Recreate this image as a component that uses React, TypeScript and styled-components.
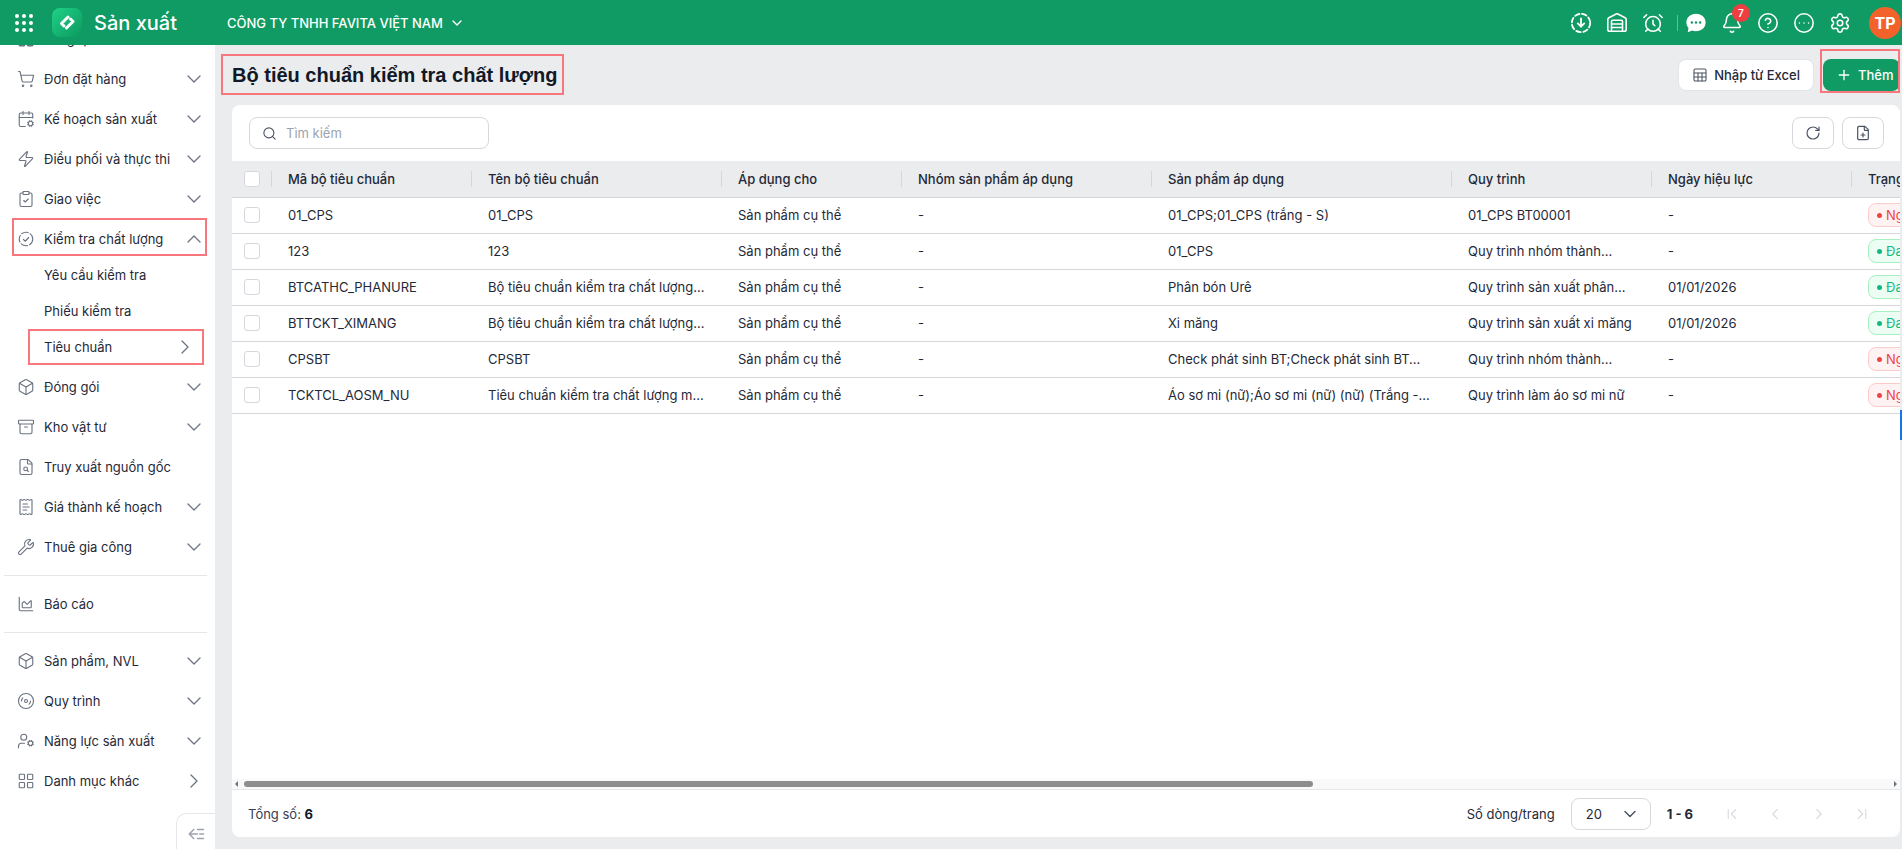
import React from "react";
import styled, { createGlobalStyle } from "styled-components";
import {
  Archive,
  ArrowLeft,
  Box,
  CalendarCog,
  ChartArea,
  ChevronDown,
  ChevronFirst,
  ChevronLast,
  ChevronLeft,
  ChevronRight,
  ChevronUp,
  CircleEllipsis,
  CircleHelp,
  ClipboardCheck,
  Disc3,
  FilePlus,
  FileSearch,
  LayoutGrid,
  Plus,
  ReceiptText,
  RotateCw,
  Search,
  Settings,
  Sheet,
  ShoppingCart,
  AlarmClock,
  Bell,
  UserCog,
  Warehouse,
  Wrench,
  Zap,
} from "lucide-react";

type NavItem = {
  label: string;
  icon: React.ReactNode;
  arrow?: "down" | "up" | "right";
};

type Row = {
  code: string;
  name: string;
  target: string;
  product: string;
  process: string;
  date: string;
  active: boolean;
};

const ROWS: Row[] = [
  {
    code: "01_CPS",
    name: "01_CPS",
    target: "Sản phẩm cụ thể",
    product: "01_CPS;01_CPS (trắng - S)",
    process: "01_CPS BT00001",
    date: "-",
    active: false,
  },
  {
    code: "123",
    name: "123",
    target: "Sản phẩm cụ thể",
    product: "01_CPS",
    process: "Quy trình nhóm thành...",
    date: "-",
    active: true,
  },
  {
    code: "BTCATHC_PHANURE",
    name: "Bộ tiêu chuẩn kiểm tra chất lượng...",
    target: "Sản phẩm cụ thể",
    product: "Phân bón Urê",
    process: "Quy trình sản xuất phân...",
    date: "01/01/2026",
    active: true,
  },
  {
    code: "BTTCKT_XIMANG",
    name: "Bộ tiêu chuẩn kiểm tra chất lượng...",
    target: "Sản phẩm cụ thể",
    product: "Xi măng",
    process: "Quy trình sản xuất xi măng",
    date: "01/01/2026",
    active: true,
  },
  {
    code: "CPSBT",
    name: "CPSBT",
    target: "Sản phẩm cụ thể",
    product: "Check phát sinh BT;Check phát sinh BT...",
    process: "Quy trình nhóm thành...",
    date: "-",
    active: false,
  },
  {
    code: "TCKTCL_AOSM_NU",
    name: "Tiêu chuẩn kiểm tra chất lượng m...",
    target: "Sản phẩm cụ thể",
    product: "Áo sơ mi (nữ);Áo sơ mi (nữ) (nữ) (Trắng -...",
    process: "Quy trình làm áo sơ mi nữ",
    date: "-",
    active: false,
  },
];

const COLUMNS = [
  { title: "Mã bộ tiêu chuẩn", width: 200 },
  { title: "Tên bộ tiêu chuẩn", width: 250 },
  { title: "Áp dụng cho", width: 180 },
  { title: "Nhóm sản phẩm áp dụng", width: 250 },
  { title: "Sản phẩm áp dụng", width: 300 },
  { title: "Quy trình", width: 200 },
  { title: "Ngày hiệu lực", width: 200 },
  { title: "Trạng thái", width: 200 },
];

const DashedCheck = () => (
  <svg width="18" height="18" viewBox="0 0 24 24" fill="none" stroke="currentColor" strokeWidth="1.5" strokeLinecap="round" strokeLinejoin="round">
    <circle cx="12" cy="12" r="9" strokeDasharray="9 3" />
    <path d="m8.5 12.5 2.5 2.5 4.5-5" />
  </svg>
);

const Logo = () => (
  <svg width="30" height="30" viewBox="0 0 30 30">
    <defs>
      <linearGradient id="logoFill" x1="0" y1="0" x2="1" y2="1">
        <stop offset="0" stopColor="#1fd286" />
        <stop offset="1" stopColor="#0c9960" />
      </linearGradient>
    </defs>
    <rect width="30" height="29" rx="8" fill="url(#logoFill)" />
    <path d="M9.5 15.5 16 9M14.5 20 21 13.5M9.5 15.5 12 18M21 13.5 18.500 11" fill="none" stroke="#fff" strokeWidth="3" strokeLinecap="round" />
  </svg>
);

const DownloadBadge = () => (
  <svg width="22" height="22" viewBox="0 0 24 24" fill="none" stroke="#fff" strokeWidth="2" strokeLinecap="round" strokeLinejoin="round">
    <circle cx="12" cy="12" r="10" strokeDasharray="5 3" />
    <path d="M12 7v9M8.500 12.500 12 16l3.500-3.500" />
  </svg>
);

const ChatBubble = () => (
  <svg width="22" height="22" viewBox="0 0 24 24">
    <path d="M12 2C6 2 1.500 6.200 1.500 11.500c0 2.300.9 4.400 2.300 6L3 22l4.800-1.700c1.300.5 2.700.7 4.200.7 6 0 10.500-4.200 10.500-9.500S18 2 12 2z" fill="#fff" />
    <circle cx="7.500" cy="11.500" r="1.300" fill="#0f9b63" />
    <circle cx="12" cy="11.500" r="1.300" fill="#0f9b63" />
    <circle cx="16.500" cy="11.500" r="1.300" fill="#0f9b63" />
  </svg>
);

const CollapseIcon = () => (
  <svg width="18" height="18" viewBox="0 0 24 24" fill="none" stroke="#9ca3af" strokeWidth="2" strokeLinecap="round" strokeLinejoin="round">
    <path d="M9 6 3 12l6 6M3 12h11M14 6h8M17 12h5M14 18h8" />
  </svg>
);

const TOP_NAV: NavItem[] = [
  { label: "Tổng quan", icon: <LayoutGrid size={18} />, arrow: "down" },
  { label: "Đơn đặt hàng", icon: <ShoppingCart size={18} strokeWidth={1.5} />, arrow: "down" },
  { label: "Kế hoạch sản xuất", icon: <CalendarCog size={18} strokeWidth={1.5} />, arrow: "down" },
  { label: "Điều phối và thực thi", icon: <Zap size={18} strokeWidth={1.5} />, arrow: "down" },
  { label: "Giao việc", icon: <ClipboardCheck size={18} strokeWidth={1.5} />, arrow: "down" },
  { label: "Kiểm tra chất lượng", icon: <DashedCheck />, arrow: "up" },
];

const MID_NAV: NavItem[] = [
  { label: "Đóng gói", icon: <Box size={18} strokeWidth={1.5} />, arrow: "down" },
  { label: "Kho vật tư", icon: <Archive size={18} strokeWidth={1.5} />, arrow: "down" },
  { label: "Truy xuất nguồn gốc", icon: <FileSearch size={18} strokeWidth={1.5} /> },
  { label: "Giá thành kế hoạch", icon: <ReceiptText size={18} strokeWidth={1.5} />, arrow: "down" },
  { label: "Thuê gia công", icon: <Wrench size={18} strokeWidth={1.5} />, arrow: "down" },
];

const BOTTOM_NAV: NavItem[] = [
  { label: "Sản phẩm, NVL", icon: <Box size={18} strokeWidth={1.5} />, arrow: "down" },
  { label: "Quy trình", icon: <Disc3 size={18} strokeWidth={1.5} />, arrow: "down" },
  { label: "Năng lực sản xuất", icon: <UserCog size={18} strokeWidth={1.5} />, arrow: "down" },
  { label: "Danh mục khác", icon: <LayoutGrid size={18} strokeWidth={1.5} />, arrow: "right" },
];

const renderNavItem = (item: NavItem) => (
  <NavRow key={item.label}>
    <NavIcon>{item.icon}</NavIcon>
    <NavLabel>{item.label}</NavLabel>
    {item.arrow === "down" && <ChevronDown size={24} strokeWidth={1.3} />}
    {item.arrow === "up" && <ChevronUp size={24} strokeWidth={1.3} />}
    {item.arrow === "right" && <ChevronRight size={24} strokeWidth={1.3} />}
  </NavRow>
);

export default function App() {
  return (
    <Page>
      <GlobalStyle />
      <TopBar>
        <AppDots>
          {Array.from({ length: 9 }).map((_, i) => (
            <i key={i} />
          ))}
        </AppDots>
        <LogoWrap>
          <Logo />
        </LogoWrap>
        <AppName>Sản xuất</AppName>
        <Company>
          CÔNG TY TNHH FAVITA VIỆT NAM
          <ChevronDown size={16} strokeWidth={2} />
        </Company>
        <TopActions>
          <TopIcon><DownloadBadge /></TopIcon>
          <TopIcon><Warehouse size={22} strokeWidth={1.7} /></TopIcon>
          <TopIcon><AlarmClock size={22} strokeWidth={1.7} /></TopIcon>
          <TopDivider />
          <TopIcon><ChatBubble /></TopIcon>
          <TopIcon>
            <Bell size={22} strokeWidth={1.7} />
            <BellBadge>7</BellBadge>
          </TopIcon>
          <TopIcon><CircleHelp size={22} strokeWidth={1.7} /></TopIcon>
          <TopIcon><CircleEllipsis size={22} strokeWidth={1.7} /></TopIcon>
          <TopIcon><Settings size={22} strokeWidth={1.7} /></TopIcon>
          <Avatar>TP</Avatar>
        </TopActions>
      </TopBar>

      <Body>
        <Sidebar>
          <NavList>
            {TOP_NAV.map(renderNavItem)}
            <SubList>
              <SubRow>Yêu cầu kiểm tra</SubRow>
              <SubRow>Phiếu kiểm tra</SubRow>
              <SubRow>
                Tiêu chuẩn
                <ChevronRight size={24} strokeWidth={1.3} />
              </SubRow>
            </SubList>
            {MID_NAV.map(renderNavItem)}
            <NavSeparator />
            {renderNavItem({ label: "Báo cáo", icon: <ChartArea size={18} strokeWidth={1.5} /> })}
            <NavSeparator />
            {BOTTOM_NAV.map(renderNavItem)}
          </NavList>
          <CollapseTab>
            <CollapseIcon />
          </CollapseTab>
        </Sidebar>

        <Main>
          <PageHeader>
            <Title>Bộ tiêu chuẩn kiểm tra chất lượng</Title>
            <HeaderActions>
              <OutlineButton>
                <Sheet size={16} strokeWidth={1.6} />
                Nhập từ Excel
              </OutlineButton>
              <PrimaryButton>
                <Plus size={16} strokeWidth={2} />
                Thêm
              </PrimaryButton>
            </HeaderActions>
          </PageHeader>

          <Card>
            <Toolbar>
              <SearchBox>
                <Search size={15} strokeWidth={1.8} />
                <SearchInput placeholder="Tìm kiếm" />
              </SearchBox>
              <ToolButtons>
                <IconButton><RotateCw size={16} strokeWidth={1.8} /></IconButton>
                <IconButton><FilePlus size={16} strokeWidth={1.8} /></IconButton>
              </ToolButtons>
            </Toolbar>

            <TableArea>
              <Table>
                <colgroup>
                  <col width={40} />
                  {COLUMNS.map((c) => (
                    <col key={c.title} width={c.width} />
                  ))}
                </colgroup>
                <thead>
                  <tr>
                    <HeadCell>
                      <Checkbox />
                    </HeadCell>
                    {COLUMNS.map((c) => (
                      <HeadCell key={c.title}>{c.title}</HeadCell>
                    ))}
                  </tr>
                </thead>
                <tbody>
                  {ROWS.map((row) => (
                    <tr key={row.code}>
                      <Cell>
                        <Checkbox />
                      </Cell>
                      <Cell>{row.code}</Cell>
                      <Cell>{row.name}</Cell>
                      <Cell>{row.target}</Cell>
                      <Cell>-</Cell>
                      <Cell>{row.product}</Cell>
                      <Cell>{row.process}</Cell>
                      <Cell>{row.date}</Cell>
                      <Cell>
                        <StatusPill $active={row.active}>
                          <i />
                          {row.active ? "Đang áp dụng" : "Ngừng áp dụng"}
                        </StatusPill>
                      </Cell>
                    </tr>
                  ))}
                </tbody>
              </Table>
            </TableArea>

            <ScrollTrack>
              <ArrowLeftTip />
              <ScrollRail>
                <ScrollThumb />
              </ScrollRail>
              <ArrowRightTip />
            </ScrollTrack>

            <Footer>
              <Total>
                Tổng số: <strong>6</strong>
              </Total>
              <FooterRight>
                <PageSizeLabel>Số dòng/trang</PageSizeLabel>
                <PageSize>
                  20
                  <ChevronDown size={20} strokeWidth={1.8} />
                </PageSize>
                <PageRange>1 - 6</PageRange>
                <Pager>
                  <PagerButton><ChevronFirst size={18} strokeWidth={1.5} /></PagerButton>
                  <PagerButton><ChevronLeft size={18} strokeWidth={1.5} /></PagerButton>
                  <PagerButton><ChevronRight size={18} strokeWidth={1.5} /></PagerButton>
                  <PagerButton><ChevronLast size={18} strokeWidth={1.5} /></PagerButton>
                </Pager>
              </FooterRight>
            </Footer>
          </Card>
          <SideTab />
        </Main>
      </Body>

      <Marker $left={221} $top={54} $width={343} $height={41} />
      <Marker $left={1820} $top={49} $width={80} $height={44} />
      <Marker $left={12} $top={218} $width={195} $height={38} />
      <Marker $left={28} $top={329} $width={176} $height={36} />
    </Page>
  );
}

const GlobalStyle = createGlobalStyle`
  html, body {
    margin: 0;
    padding: 0;
    height: 100%;
    overflow: hidden;
  }
  * {
    box-sizing: border-box;
  }
  body {
    font-family: Inter, "Noto Sans", sans-serif;
    font-size: 13px;
    color: #1f2937;
  }
`;

const Page = styled.div`
  position: relative;
  width: 100%;
  height: 100vh;
  display: flex;
  flex-direction: column;
  overflow: hidden;
  background: #ebecee;
`;

const TopBar = styled.header`
  height: 45px;
  flex-shrink: 0;
  display: flex;
  align-items: center;
  padding: 0 1px 0 15px;
  background: #0f9b63;
  color: #fff;
`;

const AppDots = styled.div`
  width: 18px;
  height: 18px;
  display: grid;
  grid-template-columns: repeat(3, 4px);
  grid-template-rows: repeat(3, 4px);
  justify-content: space-between;
  align-content: space-between;

  i {
    border-radius: 50%;
    background: #fff;
  }
`;

const LogoWrap = styled.div`
  display: flex;
  margin-left: 19px;
`;

const AppName = styled.div`
  margin-left: 12px;
  font-size: 20px;
  font-weight: 500;
`;

const Company = styled.div`
  display: flex;
  align-items: center;
  gap: 6px;
  margin-left: 50px;
  font-size: 13px;
  font-weight: 500;
`;

const TopActions = styled.div`
  display: flex;
  align-items: center;
  margin-left: auto;
`;

const TopIcon = styled.div`
  position: relative;
  width: 36px;
  height: 36px;
  display: flex;
  align-items: center;
  justify-content: center;
`;

const TopDivider = styled.span`
  width: 1px;
  height: 16px;
  margin: 0 0 0 6px;
  background: rgba(255, 255, 255, 0.35);
`;

const BellBadge = styled.span`
  position: absolute;
  top: -1px;
  right: 0;
  width: 18px;
  height: 18px;
  border-radius: 50%;
  display: flex;
  align-items: center;
  justify-content: center;
  background: #ef3e42;
  font-size: 10px;
  font-weight: 600;
`;

const Avatar = styled.div`
  width: 32px;
  height: 32px;
  margin-left: 11px;
  border-radius: 50%;
  display: flex;
  align-items: center;
  justify-content: center;
  background: #f4622c;
  font-size: 16px;
  font-weight: 700;
`;

const Body = styled.div`
  flex: 1;
  min-height: 0;
  display: flex;
`;

const Sidebar = styled.aside`
  position: relative;
  width: 215px;
  flex-shrink: 0;
  overflow: hidden;
  background: #fff;
`;

const NavList = styled.nav`
  display: flex;
  flex-direction: column;
  gap: 4px;
  margin-top: -24px;
`;

const NavRow = styled.div`
  height: 36px;
  display: flex;
  align-items: center;
  padding: 0 9px 0 17px;
  color: #6b7280;
`;

const NavIcon = styled.span`
  width: 18px;
  height: 18px;
  margin-right: 9px;
  display: flex;
`;

const NavLabel = styled.span`
  flex: 1;
  font-size: 13px;
  color: #1f2937;
`;

const SubList = styled.div`
  display: flex;
  flex-direction: column;
  margin-top: -4px;
`;

const SubRow = styled.div`
  height: 36px;
  display: flex;
  align-items: center;
  justify-content: space-between;
  padding: 0 18px 0 44px;
  font-size: 13px;

  svg {
    color: #6b7280;
  }
`;

const NavSeparator = styled.hr`
  width: 203px;
  height: 1px;
  margin: 6px 0 6px 4px;
  border: 0;
  background: #e5e7eb;
`;

const CollapseTab = styled.button`
  position: absolute;
  right: 0;
  bottom: 0;
  width: 39px;
  height: 36px;
  padding: 4px 0 0;
  display: flex;
  align-items: center;
  justify-content: center;
  background: #fff;
  border: 1px solid #e5e7eb;
  border-width: 1px 0 0 1px;
  border-top-left-radius: 10px;
`;

const Main = styled.main`
  position: relative;
  flex: 1;
  min-width: 0;
  display: flex;
  flex-direction: column;
  padding: 0 2px 12px 17px;
`;

const PageHeader = styled.div`
  height: 60px;
  flex-shrink: 0;
  display: flex;
  align-items: center;
  justify-content: space-between;
`;

const Title = styled.h1`
  margin: 0;
  font-family: "Liberation Sans", Arial, sans-serif;
  font-size: 20px;
  font-weight: 700;
  color: #111827;
`;

const HeaderActions = styled.div`
  display: flex;
  align-items: center;
  gap: 9px;
`;

const OutlineButton = styled.button`
  height: 32px;
  padding: 0 13px;
  display: flex;
  align-items: center;
  gap: 6px;
  font: 500 13px Inter, sans-serif;
  color: #1f2937;
  background: #fff;
  border: 1px solid #e2e4e8;
  border-radius: 8px;

  svg {
    color: #4b5563;
  }
`;

const PrimaryButton = styled.button`
  height: 32px;
  width: 77px;
  padding: 0 0 0 13px;
  display: flex;
  align-items: center;
  gap: 6px;
  font: 500 13px Inter, sans-serif;
  color: #fff;
  background: #0f9b63;
  border: 0;
  border-radius: 8px;
`;

const Card = styled.section`
  flex: 1;
  min-height: 0;
  display: flex;
  flex-direction: column;
  overflow: hidden;
  background: #fff;
  border-radius: 8px;
`;

const Toolbar = styled.div`
  height: 56px;
  flex-shrink: 0;
  display: flex;
  align-items: flex-start;
  justify-content: space-between;
  padding: 12px 16px 12px 17px;
`;

const SearchBox = styled.label`
  width: 240px;
  height: 32px;
  padding: 0 12px;
  display: flex;
  align-items: center;
  gap: 9px;
  color: #4b5563;
  border: 1px solid #d6d8dd;
  border-radius: 8px;
`;

const SearchInput = styled.input`
  flex: 1;
  min-width: 0;
  border: 0;
  outline: 0;
  padding: 0;
  font: 400 13px Inter, sans-serif;

  &::placeholder {
    color: #9ca3af;
    opacity: 1;
  }
`;

const ToolButtons = styled.div`
  display: flex;
  gap: 8px;
`;

const IconButton = styled.button`
  width: 42px;
  height: 32px;
  display: flex;
  align-items: center;
  justify-content: center;
  padding: 0;
  color: #4b5563;
  background: #fff;
  border: 1px solid #d6d8dd;
  border-radius: 8px;
`;

const TableArea = styled.div`
  flex: 1;
  min-height: 0;
  overflow: hidden;
`;

const Table = styled.table`
  width: 1620px;
  table-layout: fixed;
  border-collapse: collapse;
`;

const HeadCell = styled.th`
  position: relative;
  height: 36px;
  padding: 0 16px;
  text-align: left;
  font-size: 13px;
  font-weight: 500;
  color: #1f2937;
  white-space: nowrap;
  background: #ebecee;
  border-bottom: 1px solid #d5d7dc;

  &::after {
    content: "";
    position: absolute;
    top: 10px;
    right: 0;
    width: 1px;
    height: 16px;
    background: #d5d7dc;
  }

  &:first-child {
    padding: 0 0 0 12px;
  }

  &:last-child::after {
    display: none;
  }
`;

const Cell = styled.td`
  height: 36px;
  padding: 0 16px;
  font-size: 13px;
  color: #1f2937;
  white-space: nowrap;
  overflow: hidden;
  border-bottom: 1px solid #d5d7dc;

  &:first-child {
    padding: 0 0 0 12px;
  }
`;

const Checkbox = styled.span`
  display: block;
  width: 16px;
  height: 16px;
  background: #fff;
  border: 1px solid #d6d8dd;
  border-radius: 3px;
`;

const StatusPill = styled.span<{ $active: boolean }>`
  display: inline-flex;
  align-items: center;
  gap: 4px;
  height: 24px;
  padding: 0 8px;
  border-radius: 8px;
  color: ${(p) => (p.$active ? "#10b981" : "#ef4444")};
  background: ${(p) => (p.$active ? "#ecfdf3" : "#fef2f2")};
  border: 1px solid ${(p) => (p.$active ? "#a7f0c0" : "#fecaca")};

  i {
    width: 5px;
    height: 5px;
    border-radius: 50%;
    background: currentColor;
  }
`;

const ScrollTrack = styled.div`
  height: 10px;
  flex-shrink: 0;
  display: flex;
  align-items: center;
  background: #f9f9f9;
`;

const ScrollRail = styled.div`
  flex: 1;
  padding: 0 2px;
`;

const ScrollThumb = styled.div`
  width: 65%;
  height: 6px;
  border-radius: 3px;
  background: #8d8d8d;
`;

const ArrowLeftTip = styled.span`
  width: 0;
  height: 0;
  margin: 0 4px 0 3px;
  border: 3px solid transparent;
  border-left: 0;
  border-right: 3px solid #6b7280;
`;

const ArrowRightTip = styled.span`
  width: 0;
  height: 0;
  margin: 0 3px 0 4px;
  border: 3px solid transparent;
  border-right: 0;
  border-left: 3px solid #6b7280;
`;

const Footer = styled.footer`
  height: 48px;
  flex-shrink: 0;
  display: flex;
  align-items: center;
  justify-content: space-between;
  padding: 0 16px 0 16px;
  border-top: 1px solid #e5e7eb;
`;

const Total = styled.div`
  color: #374151;

  strong {
    font-weight: 700;
    color: #111827;
  }
`;

const FooterRight = styled.div`
  display: flex;
  align-items: center;
`;

const PageSizeLabel = styled.span`
  margin-right: 16px;
  color: #1f2937;
`;

const PageSize = styled.div`
  width: 80px;
  height: 32px;
  padding: 0 14px;
  display: flex;
  align-items: center;
  justify-content: space-between;
  color: #1f2937;
  border: 1px solid #d6d8dd;
  border-radius: 8px;

  svg {
    margin-right: -4px;
    color: #4b5563;
  }
`;

const PageRange = styled.span`
  margin: 0 17px 0 16px;
  font-weight: 700;
  color: #1f2937;
`;

const Pager = styled.div`
  display: flex;
`;

const PagerButton = styled.span`
  width: 43.5px;
  height: 32px;
  display: flex;
  align-items: center;
  justify-content: center;
  color: #d8dadf;
`;

const SideTab = styled.div`
  position: absolute;
  right: 0;
  top: 365px;
  width: 2px;
  height: 30px;
  background: #1a73e8;
`;

const Marker = styled.div<{ $left: number; $top: number; $width: number; $height: number }>`
  position: absolute;
  left: ${(p) => p.$left}px;
  top: ${(p) => p.$top}px;
  width: ${(p) => p.$width}px;
  height: ${(p) => p.$height}px;
  border: 2px solid #f8777c;
  pointer-events: none;
`;
